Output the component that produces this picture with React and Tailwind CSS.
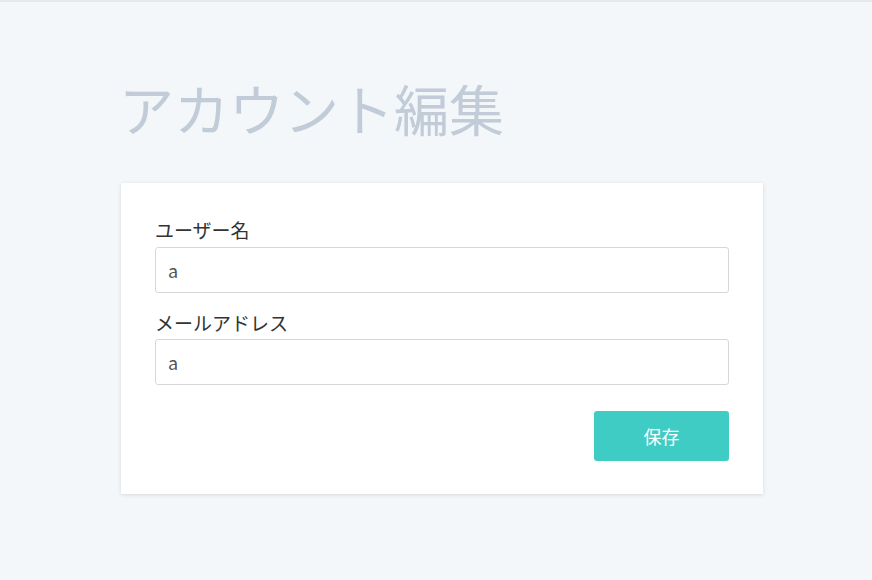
export default function App() {
  const font = { fontFamily: '"Noto Sans CJK JP", "Noto Sans", sans-serif' };
  return (
    <div className="min-h-[580px] bg-[#f4f7fa] border-t-2 border-[#e5eaef]" style={font}>
      <div className="ml-[121px] w-[642px] pt-[65px]">
        <h1 className="text-[55px] leading-[80px] text-[#c1ccd8] font-normal ml-[-2px]">アカウント編集</h1>
        <div className="mt-[36px] bg-white shadow-[0_1px_4px_rgba(0,0,0,0.12)] px-[34px] pt-[33px] pb-[33px]">
          <label className="block text-[19px] leading-[28px] text-[#333]">ユーザー名</label>
          <div className="mt-[3px] h-[46px] border border-[#d8d8d8] rounded-[3px] flex items-center px-[12px] text-[18px] text-[#555]">a</div>
          <label className="block mt-[16px] text-[19px] leading-[28px] text-[#333]">メールアドレス</label>
          <div className="mt-[2px] h-[46px] border border-[#d8d8d8] rounded-[3px] flex items-center px-[12px] text-[18px] text-[#555]">a</div>
          <div className="flex justify-end mt-[26px]">
            <button className="w-[135px] h-[50px] bg-[#3fccc5] rounded-[3px] text-white text-[18px]">保存</button>
          </div>
        </div>
      </div>
    </div>
  );
}
